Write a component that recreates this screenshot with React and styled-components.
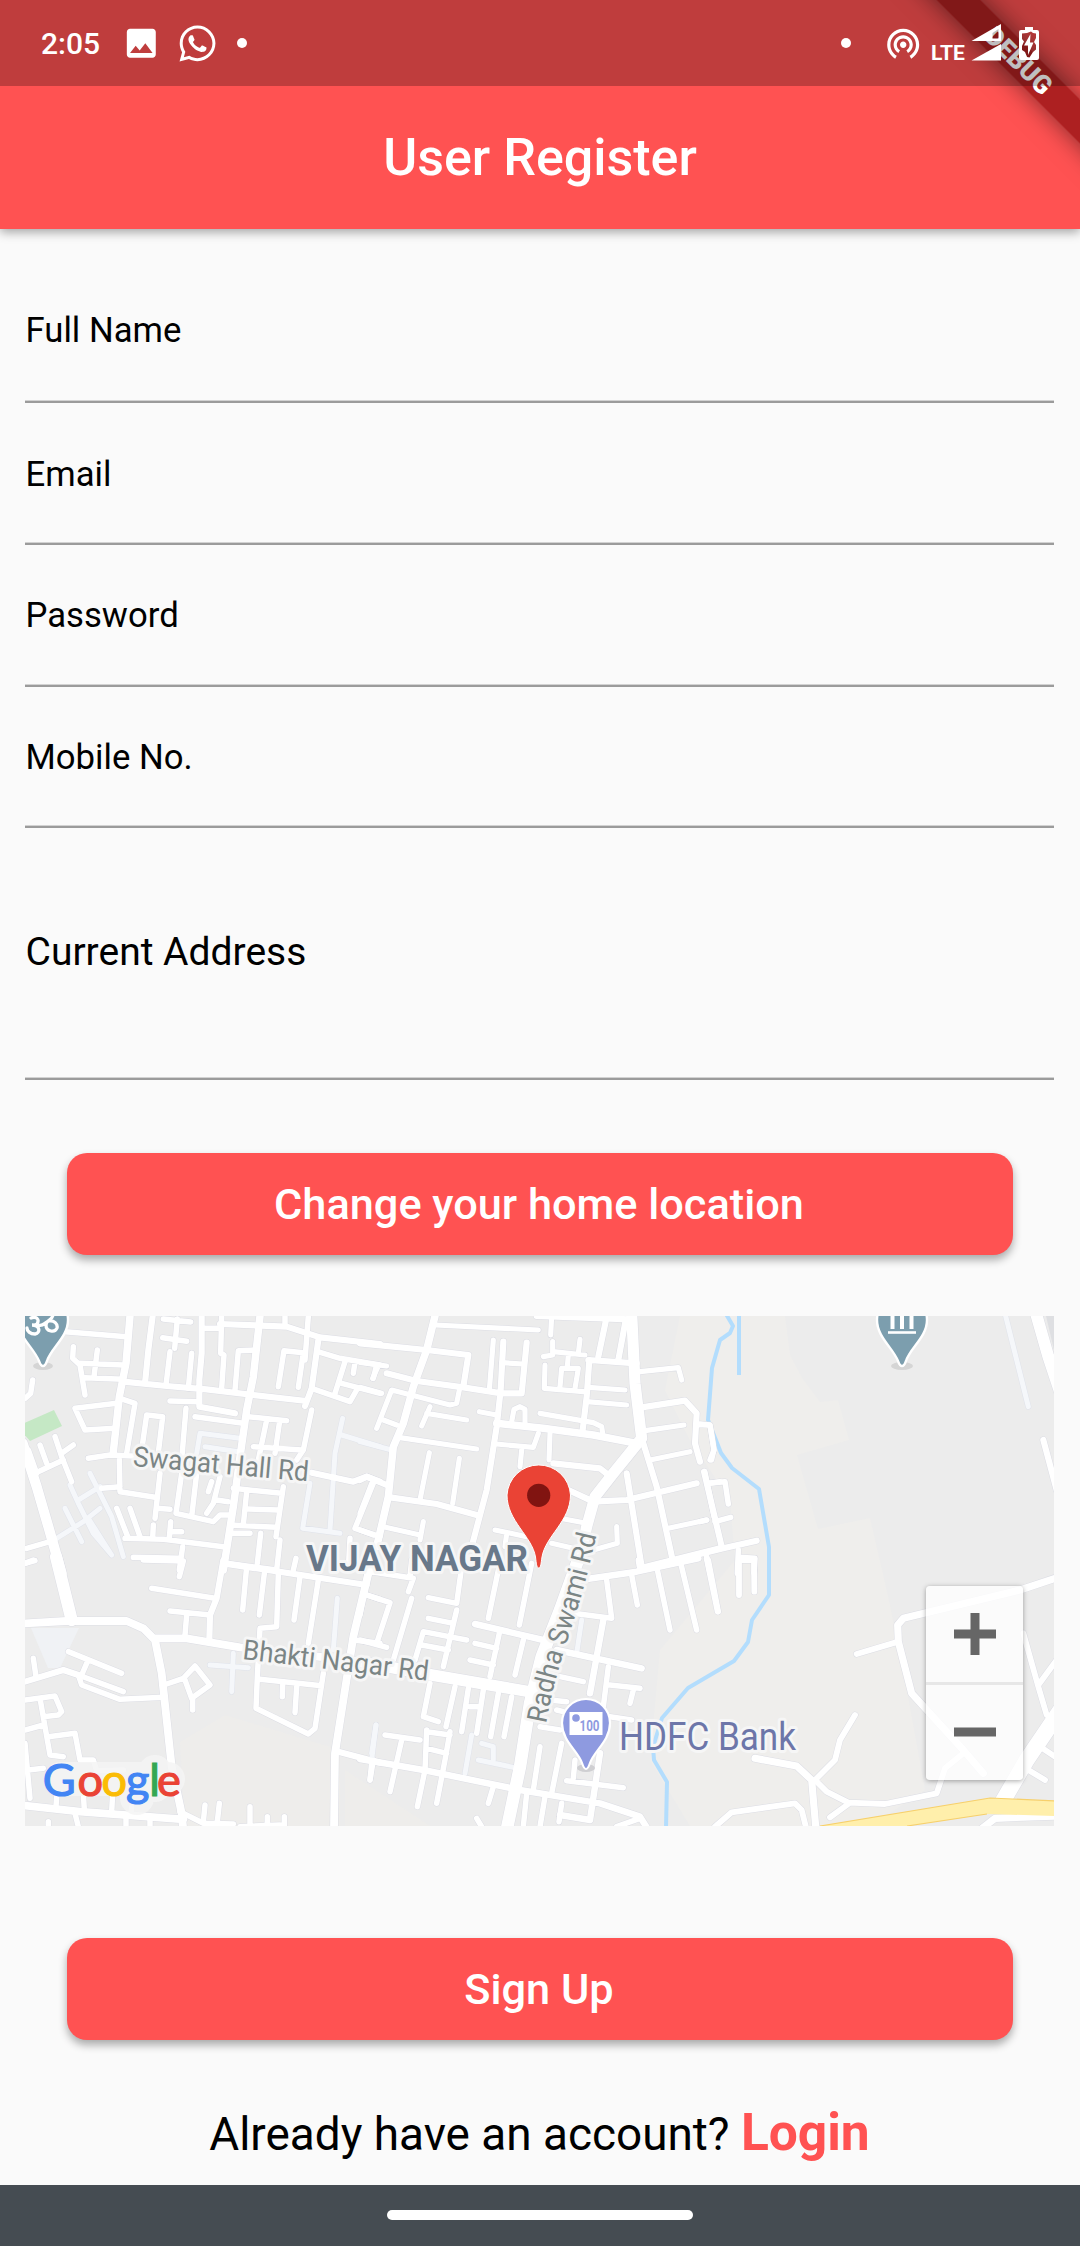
import React from "react";
import styled, { createGlobalStyle } from "styled-components";
import { MdImage, MdWifiTethering } from "react-icons/md";
import { FaWhatsapp } from "react-icons/fa";

const GlobalStyle = createGlobalStyle`
  * { box-sizing: border-box; }
  body { margin: 0; background: #fafafa; font-family: Roboto, "Noto Sans", sans-serif; }
`;

const Page = styled.div`
  width: 1080px;
  height: 2246px;
  display: flex;
  flex-direction: column;
  background: #fafafa;
  overflow: hidden;
`;

const Header = styled.header`
  position: relative;
  flex: none;
  height: 229px;
  display: flex;
  flex-direction: column;
  background: #ff5252;
  box-shadow: 0 3px 10px rgba(0, 0, 0, 0.36);
`;

const StatusBar = styled.div`
  position: relative;
  z-index: 2;
  height: 86px;
  padding: 0 41px 0 41px;
  display: flex;
  align-items: center;
  justify-content: space-between;
  background: rgba(0, 0, 0, 0.25);
  color: #fff;
`;

const StatusGroup = styled.div`
  display: flex;
  align-items: center;
  height: 100%;
`;

const Clock = styled.span`
  font-size: 30px;
  font-weight: 500;
  width: 81px;
`;

const IconSlot = styled.span`
  display: flex;
  width: ${(p) => p.$width}px;
  font-size: ${(p) => p.$size}px;
`;

const Dot = styled.span`
  width: 10px;
  height: 10px;
  border-radius: 50%;
  background: #fff;
  margin-right: ${(p) => p.$after || 0}px;
`;

const Network = styled.span`
  font-size: 21px;
  font-weight: 700;
  line-height: 20px;
  width: 40px;
  padding-top: 20px;
`;

const Title = styled.h1`
  margin: 0;
  flex: 1;
  display: flex;
  align-items: center;
  justify-content: center;
  color: #fff;
  font-size: 52px;
  font-weight: 500;
`;

const BannerCorner = styled.div`
  position: absolute;
  z-index: 1;
  top: 0;
  right: 0;
  width: 240px;
  height: 229px;
  overflow: hidden;
`;

const BannerStrip = styled.div`
  position: absolute;
  top: 45px;
  left: 29px;
  width: 300px;
  height: 31px;
  display: flex;
  align-items: center;
  justify-content: center;
  transform: rotate(45deg);
  background: rgba(160, 24, 26, 0.86);
  box-shadow: 0 0 26px rgba(0, 0, 0, 0.5);
  color: #fff;
  font-size: 26px;
  font-weight: 900;
`;

const Form = styled.form`
  display: flex;
  flex-direction: column;
  padding: 0 26px 0 25px;
`;

const Field = styled.label`
  display: flex;
  flex-direction: column;
  justify-content: flex-end;
  height: ${(p) => p.$height}px;
  color: #000;
`;

const FieldLabel = styled.span`
  padding-left: 0.5px;
  margin-bottom: ${(p) => p.$gap}px;
  font-size: ${(p) => (p.$large ? 39 : 34.7)}px;
  line-height: ${(p) => (p.$large ? 48 : 40)}px;
`;

const Underline = styled.span`
  height: 3px;
  border-top: 1px solid #d2d2d2;
  background: #9b9b9b;
`;

const Button = styled.button`
  margin: ${(p) => p.$top}px 41px 0 42px;
  height: 102px;
  border: 0;
  border-radius: 20px;
  background: #ff5252;
  color: #fff;
  font: 500 43.3px Roboto, sans-serif;
  padding: 1px 2px 0 0;
  box-shadow: 0 5px 8px rgba(0, 0, 0, 0.32);
`;

const MapFrame = styled.div`
  position: relative;
  margin-top: 61px;
  height: 510px;
  overflow: hidden;
  background: #ececec;
`;

const ZoomControl = styled.div`
  position: absolute;
  right: 31px;
  top: 270px;
  width: 97px;
  height: 194px;
  display: flex;
  flex-direction: column;
  border-radius: 4px;
  background: rgba(255, 255, 255, 0.8);
  box-shadow: 0 1px 5px rgba(0, 0, 0, 0.35);
`;

const ZoomButton = styled.div`
  flex: 1;
  display: grid;
  place-items: center;
  & + & { border-top: 3px solid #e7e7e7; }
`;

const SignInRow = styled.div`
  margin-top: 63px;
  display: flex;
  justify-content: center;
  align-items: baseline;
  font-size: 45.9px;
  line-height: 60px;
  white-space: pre;
`;

const Login = styled.span`
  color: #ff5252;
  font-size: 51.5px;
  font-weight: 700;
`;

const NavBar = styled.nav`
  margin-top: auto;
  flex: none;
  height: 61px;
  display: flex;
  align-items: center;
  justify-content: center;
  background: #454c52;
`;

const HomePill = styled.div`
  width: 306px;
  height: 10px;
  margin-bottom: 1px;
  border-radius: 5px;
  background: #fff;
`;

/* Road geometry, grouped by map tile: origin, then stroke width -> segments. */
const TILES = [
  {
    at: [20, 1300],
    pale: "M210,520 275,650 310,770M110,715 190,665 240,625M135,625 185,725M150,555 175,610 220,700 275,765M175,600 240,560M205,655 275,765M660,415 540,400 530,460M555,440 655,455M968,355 945,460 930,690M965,405 1080,440M870,550 848,685 960,700",
    roads: {
      15: "M135,95 320,110M430,57 512,66M472,57 464,145M428,113 500,124M550,85 600,85M605,48 602,160 612,165 605,265M795,48 795,72M865,48 855,180M160,140 158,175 180,195 195,285M180,190 310,195M232,150 222,230M195,233 310,238M450,155 438,255M515,160 505,265M710,150 655,152 645,270M850,158 792,152 775,260M850,158 835,262M893,155 960,175 1080,195M1005,185 1000,220M975,185 945,280M1070,195 1060,235M965,250 1080,280M875,265 990,305 1010,270M450,303 535,305M525,350 670,370M285,385 195,390 165,325 290,310M300,295 345,310 320,460M365,450 380,345 428,350 410,500M498,325 485,480M205,475 270,465 340,468M685,350 800,362M740,360 715,480M778,370 765,460M700,440 845,450M875,330 850,450 830,480M298,480 300,575 405,592M245,565 300,560M420,520 405,655M412,625 450,628M485,520 468,640 580,665 600,645 625,645M530,520 515,650M600,530 580,610 560,640M575,545 565,575M590,600 625,605M640,565 785,580M790,560 768,710M680,575 670,675M685,627 775,630M630,675 770,682M290,625 325,715M330,625 360,710M315,715 430,718 610,740M400,675 398,715M452,665 448,715M455,695 485,695M340,772 480,775M488,740 478,810M630,700 690,700M722,700 712,790M780,720 770,810M620,790 770,810M20,745 90,725M15,790 40,780M105,410 125,470 155,545M125,460 160,435M45,520 130,480M60,435 80,490M25,450 50,520M38,240 32,280 15,295M1060,550 1005,685 1080,710M990,715 985,810M828,775 820,810",
      17: "M398,48 385,150 375,250M545,48 545,160 538,240 538,320 645,340M895,120 875,265 855,318M310,245 440,258 560,268 700,285 860,303M600,72 800,80 900,112 1080,132M875,518 1000,545 1040,530 1080,545",
      21: "M330,48 318,190 308,240 298,290 280,455M720,48 700,230 680,330 660,470 640,620 610,810",
      29: "M8,430 50,560 85,680 125,820",
    },
  },
  {
    at: [360, 1300],
    pale: "M0,425 95,450",
    roads: {
      14: "M225,75 535,90M0,187 80,198M55,198 38,235M0,262 65,280M50,385 95,270 270,315 290,310 298,270M70,360 110,375M210,320 185,378M200,340 320,360M400,120 388,270M425,188 490,192M358,335 410,345M455,365 462,328 480,320 495,328 495,370M540,340 700,368 725,380 728,400M115,412 350,447M408,432 520,442 535,400M570,400 567,480M485,450 480,500M208,458 180,600M298,475 278,610M575,48 572,105M578,125 578,165 550,170M580,155 675,165M660,118 655,160M625,165 622,200M555,195 553,265 670,275M600,260 605,205 655,205 645,265M685,262 795,270M680,305 800,315M840,215 955,203 965,240M855,392 972,375M870,480 990,455M1015,375 1050,375 1062,450 1055,480M925,685 1040,660M1035,515 1062,650M1050,550 1080,545M600,655 680,670M405,690 500,710M575,730 640,745M770,680 772,730 700,750M0,690 40,705M70,680 180,705M190,665 180,720M440,700 435,740M35,550 0,640",
      17: "M0,130 200,150 325,165 310,260M80,220 170,243 310,262 425,280 485,280 500,128M430,125 422,270 410,380 380,570 335,740M580,490 720,505 745,525M90,592 230,612 350,645M530,48 810,58M738,60 715,170M797,60 775,180M685,180 830,190M688,180 680,290 668,390M845,322 975,302 1010,340 1005,430 1020,485M850,430 890,560 940,790M700,605 800,600 1010,550M800,520 845,800M625,570 700,605M840,805 1080,745M0,540 20,530 80,555",
      21: "M225,48 200,150 160,260 130,370 100,440 85,590 50,740M410,370 550,385 700,405 830,430",
      32: "M815,40 825,250 845,415 760,520 705,590 680,680 660,780",
    },
  },
  {
    at: [700, 1300],
    pale: "M915,40 985,320",
    roads: {
      15: "M0,372 30,375 42,450 30,480M20,550 75,545 85,612M45,665 92,652M0,665 20,660M112,820 115,750M118,772 165,775 162,820M20,770 30,820",
      17: "M12,515 65,740M0,762 70,745 170,722M1030,420 1070,570",
      34: "M1005,30 1045,170 1085,290",
    },
  },
  {
    at: [20, 1560],
    pale: "M952,115 940,270M570,315 685,323M640,280 635,395M1068,495 1055,580",
    roads: {
      15: "M370,0 490,3 478,50M395,85 585,115M450,153 570,165M500,165 495,225M680,20 668,150M733,40 718,165M775,40 770,200 720,205 712,350 708,445 865,522 885,505 910,340M840,50 822,180M895,60 865,250M1040,105 1080,118M1000,240 1080,250M720,358 905,377M788,375 787,410M830,380 825,458M1060,600 1050,660M145,275 305,340M200,310 185,345M175,345 310,395M175,345 185,375 300,418 430,412M40,295 48,350M440,372 490,355 525,318 570,375 515,415 495,360M518,415 518,450M15,420 105,408 125,455 115,465 70,470M60,415 90,585 130,590M15,510 70,495M85,530 165,520 180,600 220,600 230,632 310,630M15,550 30,715M25,630 70,625M110,710 108,740M190,700 193,750M278,700 275,755M335,740 333,760M165,760 175,800M318,770 318,800M390,775 390,800M85,785 85,800M480,755 550,790 640,792M555,735 550,785M598,730 592,785M690,740 690,800M742,770 742,800M793,770 793,800M660,800 780,795M15,10 45,2",
      17: "M15,365 130,330 175,345M955,575 1080,608M610,10 1040,75M610,0 590,115 570,165 568,240",
      22: "M15,190 140,183 320,183 370,205 405,240 425,340 440,480 455,620 485,760 490,810M405,235 500,235 660,262 1020,305M1050,20 1000,230 945,580 942,810M15,737 180,755 490,778",
      35: "M108,-10 155,180",
    },
  },
  {
    at: [360, 1560],
    pale: "M48,495 35,600M335,525 315,640M365,550 400,560 400,600M355,600 460,622M665,180 650,280",
    roads: {
      15: "M0,30 160,55 145,95M155,0 150,50M205,113 290,130 305,20M25,20 0,165M20,105 90,128 50,250M0,240 80,262M155,115 100,300M290,150 250,320M205,175 280,190M165,300 190,215 320,240M185,255 265,270M415,30 385,175M515,10 478,195M420,210 390,350M345,250 410,265M330,300 400,315M490,240 465,345M210,370 190,470 235,485M285,380 258,500M325,385 305,515M370,390 350,520M415,400 392,530M455,410 432,530M330,440 360,440M75,525 180,540M125,540 90,695M35,610 30,660M200,510 195,630 172,740M200,515 270,525M270,515 255,600 230,730M200,565 260,580M400,680 385,730M740,60 755,175 640,160M815,45 832,135M890,20 930,210M960,0 1010,210M1045,0 1075,155M835,0 838,20M745,320 730,440M750,375 840,385M820,390 810,430M600,350 670,365M570,420 620,425M750,470 815,480M540,500 600,510M590,450 610,455M540,560 520,690M605,550 575,700M645,600 640,655M620,662 790,683M605,730 597,785M500,700 490,800M555,710 540,800M350,775 365,800M840,775 770,800",
      18: "M345,192 550,240M660,60 830,35 1015,-5M730,180 690,400M590,270 845,325M720,580 690,780 600,765M0,597 190,630 480,690 720,730 840,770 865,810",
      33: "M0,305 215,345 520,397",
      36: "M665,-30 600,150 545,290 510,430 480,620 440,810",
    },
  },
  {
    at: [700, 1560],
    pale: "",
    roads: {
      16: "M20,-5 53,155M117,0 117,105M162,0 163,95M117,0 162,0M470,282 595,245M790,580 735,625 710,700 555,732 445,728 380,695 345,660 405,600 420,540 465,465M445,732 390,772M45,800 95,757 285,730 305,750 320,810M970,220 1015,380 1040,465M1015,375 1070,300M1020,560 1065,590M985,630 1035,660",
      20: "M1080,50 960,90 610,175 593,195 595,245 635,400 790,570 850,640M165,595 290,618 335,660 348,810M840,810 885,775 1070,768",
      46: "M1085,445 980,600 905,730",
    },
  },
];

const tileTransform = ([x, y]) => `translate(${x} ${y}) scale(0.33333)`;

const Roads = ({ casing }) =>
  TILES.map((tile) => (
    <g key={tile.at.join()} transform={tileTransform(tile.at)}>
      <path d={tile.pale} stroke={casing ? "#dfe2ea" : "#f5f7fa"} strokeWidth={casing ? 18 : 15} />
      {Object.entries(tile.roads).map(([width, d]) => (
        <path
          key={width}
          d={d}
          stroke={casing ? "#dcdde4" : "#fff"}
          strokeWidth={Number(width) + (casing ? 4.5 : 1.5)}
        />
      ))}
    </g>
  ));

const MapText = styled.text`
  font-family: Roboto, sans-serif;
  font-size: ${(p) => p.$size}px;
  font-weight: ${(p) => p.$weight || 400};
  fill: ${(p) => p.$color || "#7b8585"};
  stroke: #f6f6f6;
  stroke-width: 6px;
  stroke-linejoin: round;
  paint-order: stroke;
`;

const LogoText = styled.text`
  font-family: Lato, sans-serif;
  font-size: 45px;
  font-weight: 400;
`;

const LOGO = [
  ["G", 42.8, "#4285f4"],
  ["o", 77.5, "#ea4335"],
  ["o", 101.5, "#fbbc05"],
  ["g", 126, "#4285f4"],
  ["l", 149.3, "#34a853"],
  ["e", 157, "#ea4335"],
];

const StreetMap = () => (
  <svg width="1029" height="510" viewBox="25 1316 1029 510" fill="none">
    <path d="M680 1316H785L790 1355 802 1378 820 1402 838 1400 849 1440 797 1455 818 1529 870 1518 890 1605 905 1680 925 1790 870 1826H690L650 1760 660 1650 735 1560 730 1500 690 1440 665 1390Z" fill="#efeeec" />
    <path d="M180 1742 225 1715 340 1750V1826H185Z M345 1770 430 1826H345Z" fill="#eeedeb" />
    <path d="M20 1425 54 1410 62 1426 30 1441 24 1434Z" fill="#c5e8c5" />
    <path d="M31 1628H79L60 1668H48Z" fill="#f0f2f5" />
    <g stroke="#b3ddfd" strokeWidth="4" strokeLinejoin="round">
      <path d="M726 1314 733 1326 730 1333 720 1340 712 1368 708 1420 721 1453 732 1468 759 1489 769 1547V1595L752 1620 748 1642 734 1661 688 1688 662 1718 653 1747 654 1760 667 1782 666 1828" />
      <path d="M739 1316V1375" />
    </g>
    <g strokeLinecap="round" strokeLinejoin="round">
      <Roads casing />
      <Roads />
    </g>
    <path d="M1046 1316 1054 1350V1316Z" fill="#dedfe2" />
    <path d="M820 1826 990 1798 1056 1801V1816L987 1814 907 1826Z" fill="#ffefab" />
    <path d="M820 1826 990 1798 1056 1801M907 1826 987 1814" stroke="#f7d06b" strokeWidth="1.2" />

    <MapText $size={28} textLength="176" lengthAdjust="spacingAndGlyphs" transform="translate(132.5 1466) rotate(5)">Swagat Hall Rd</MapText>
    <MapText $size={28} textLength="187" lengthAdjust="spacingAndGlyphs" transform="translate(242 1659) rotate(6.7)">Bhakti Nagar Rd</MapText>
    <path id="radha-swami-road" d="M546 1724C556 1668 572 1630 583 1590C589 1568 593 1550 599 1525" />
    <MapText $size={28}>
      <textPath href="#radha-swami-road" textLength="196" lengthAdjust="spacingAndGlyphs">Radha Swami Rd</textPath>
    </MapText>
    <MapText $size={36.5} $weight={700} $color="#68788a" x="306" y="1571" textLength="222" lengthAdjust="spacingAndGlyphs">VIJAY NAGAR</MapText>
    <MapText $size={38} $color="#6d76a9" x="619" y="1749.5" textLength="177" lengthAdjust="spacingAndGlyphs">HDFC Bank</MapText>

    <g transform="translate(43 1385)">
      <ellipse cx="0" cy="-19" rx="10" ry="4" fill="#d5d5d5" />
      <path d="M0-19C-2-19-3-21-4-24C-9-37-25-48-25-65A25 25 0 0 1 25-65C25-48 8-37 4-24C3-21 2-19 0-19Z" fill="#7c9eae" stroke="#fff" strokeWidth="2.4" />
      <path d="M-12-67C-7-69-3-66-6-61C-8-59-10-60-11-60C-3-60-2-52-8-51C-13-51-16-54-16-57M-5-60C1-58 1-63 6-64C11-65 15-61 14-57C12-52 3-53 3-60C3-65 9-64 10-70" stroke="#fff" strokeWidth="3.3" strokeLinecap="round" />
    </g>
    <g transform="translate(902 1385)">
      <ellipse cx="0" cy="-19" rx="11" ry="4" fill="#d5d5d5" />
      <path d="M0-19C-2-19-3-21-4-24C-9-37-25-48-25-65A25 25 0 0 1 25-65C25-48 8-37 4-24C3-21 2-19 0-19Z" fill="#7c9eae" stroke="#fff" strokeWidth="2.4" />
      <path d="M-14-52.500H14" stroke="#fff" strokeWidth="2.6" />
      <path d="M-9.500-72V-56M0-72V-56M9.500-72V-56" stroke="#fff" strokeWidth="4" />
    </g>
    <g transform="translate(586 1722)">
      <ellipse cx="0" cy="46" rx="9" ry="4" fill="#cfcfd2" />
      <path d="M0 47C-2 47-3 44-4 41C-8 29-24 19-24 1A24 24 0 0 1 24 1C24 19 8 29 4 41C3 44 2 47 0 47Z" fill="#8e9ae0" stroke="#fff" strokeWidth="2.2" />
      <rect x="-16.500" y="-10" width="33" height="23" fill="#fff" />
      <circle cx="-10" cy="-4" r="3.8" fill="#8e9ae0" />
      <text x="-6.500" y="9" fontFamily="Roboto, sans-serif" fontSize="14" fontWeight="700" fill="#8e9ae0" textLength="20" lengthAdjust="spacingAndGlyphs">100</text>
    </g>
    <path d="M538.700 1568C536.500 1568 536.300 1563 535.500 1557C532 1536 507 1521 507 1495A31.800 31.800 0 0 1 570.500 1495C570.500 1521 545.500 1536 542 1557C541 1563 541 1568 538.700 1568Z" fill="#ea4335" stroke="#fff" strokeWidth="1" />
    <circle cx="538.700" cy="1495.300" r="11.600" fill="#811411" />

    <path d="M61 1779H168M137 1779V1798M155 1772V1785" stroke="#f5f5f5" strokeWidth="34" strokeLinecap="round" opacity="0.85" />
    <LogoText>
      {LOGO.map(([letter, x, color], i) => (
        <tspan key={i} x={x} y="1796" fill={color} stroke={color} strokeWidth="1.2">{letter}</tspan>
      ))}
    </LogoText>
  </svg>
);

const SignalIcon = () => (
  <svg width="31" height="38" viewBox="0 0 31 38" fill="#fff">
    <path fillRule="evenodd" d="M30 0V17H.5ZM27.500 5 21.500 9V14.500H27.500Z" />
    <path d="M30 20V36.500H.5Z" />
  </svg>
);

const BatteryIcon = () => (
  <svg width="20" height="33" viewBox="0 0 20 33">
    <path
      fill="#fff"
      fillRule="evenodd"
      d="M6 0H14V3H18Q20 3 20 5V31Q20 33 18 33H2Q0 33 0 31V5Q0 3 2 3H6ZM8 6 3 6.500V12L5 14.500 3 19V23L6 25 8 30 10.500 30.500 14 25 17 22.500V18L15 15 17 11V6.500L14 6 12 4.500Z"
    />
    <path fill="#fff" d="M11.500 7 5 18.500H9V28L14.500 15.500H11Z" />
  </svg>
);

const FIELDS = [
  { label: "Full Name", height: 174, gap: 50 },
  { label: "Email", height: 142, gap: 48 },
  { label: "Password", height: 142, gap: 49 },
  { label: "Mobile No.", height: 141, gap: 48.5 },
  { label: "Current Address", height: 252, gap: 101.5, large: true },
];

export default function App() {
  return (
    <Page>
      <GlobalStyle />
      <Header>
        <StatusBar>
          <StatusGroup>
            <Clock>2:05</Clock>
            <IconSlot $width={55} $size={38.6}><MdImage /></IconSlot>
            <IconSlot $width={60} $size={41}><FaWhatsapp /></IconSlot>
            <Dot />
          </StatusGroup>
          <StatusGroup>
            <Dot $after={33} />
            <IconSlot $width={47} $size={38.4}><MdWifiTethering /></IconSlot>
            <Network>LTE</Network>
            <IconSlot $width={48}><SignalIcon /></IconSlot>
            <BatteryIcon />
          </StatusGroup>
        </StatusBar>
        <Title>User Register</Title>
        <BannerCorner>
          <BannerStrip>DEBUG</BannerStrip>
        </BannerCorner>
      </Header>

      <Form>
        {FIELDS.map((f) => (
          <Field key={f.label} $height={f.height}>
            <FieldLabel $gap={f.gap} $large={f.large}>{f.label}</FieldLabel>
            <Underline />
          </Field>
        ))}
        <Button type="button" $top={73}>Change your home location</Button>
        <MapFrame>
          <StreetMap />
          <ZoomControl>
            <ZoomButton>
              <svg width="42" height="42" viewBox="0 0 42 42"><path d="M0 21H42M21 0V42" stroke="#666" strokeWidth="9" /></svg>
            </ZoomButton>
            <ZoomButton>
              <svg width="42" height="42" viewBox="0 0 42 42"><path d="M0 21H42" stroke="#666" strokeWidth="9" /></svg>
            </ZoomButton>
          </ZoomControl>
        </MapFrame>
        <Button type="button" $top={112}>Sign Up</Button>
        <SignInRow>
          <span>Already have an account? </span>
          <Login>Login</Login>
        </SignInRow>
      </Form>

      <NavBar>
        <HomePill />
      </NavBar>
    </Page>
  );
}
